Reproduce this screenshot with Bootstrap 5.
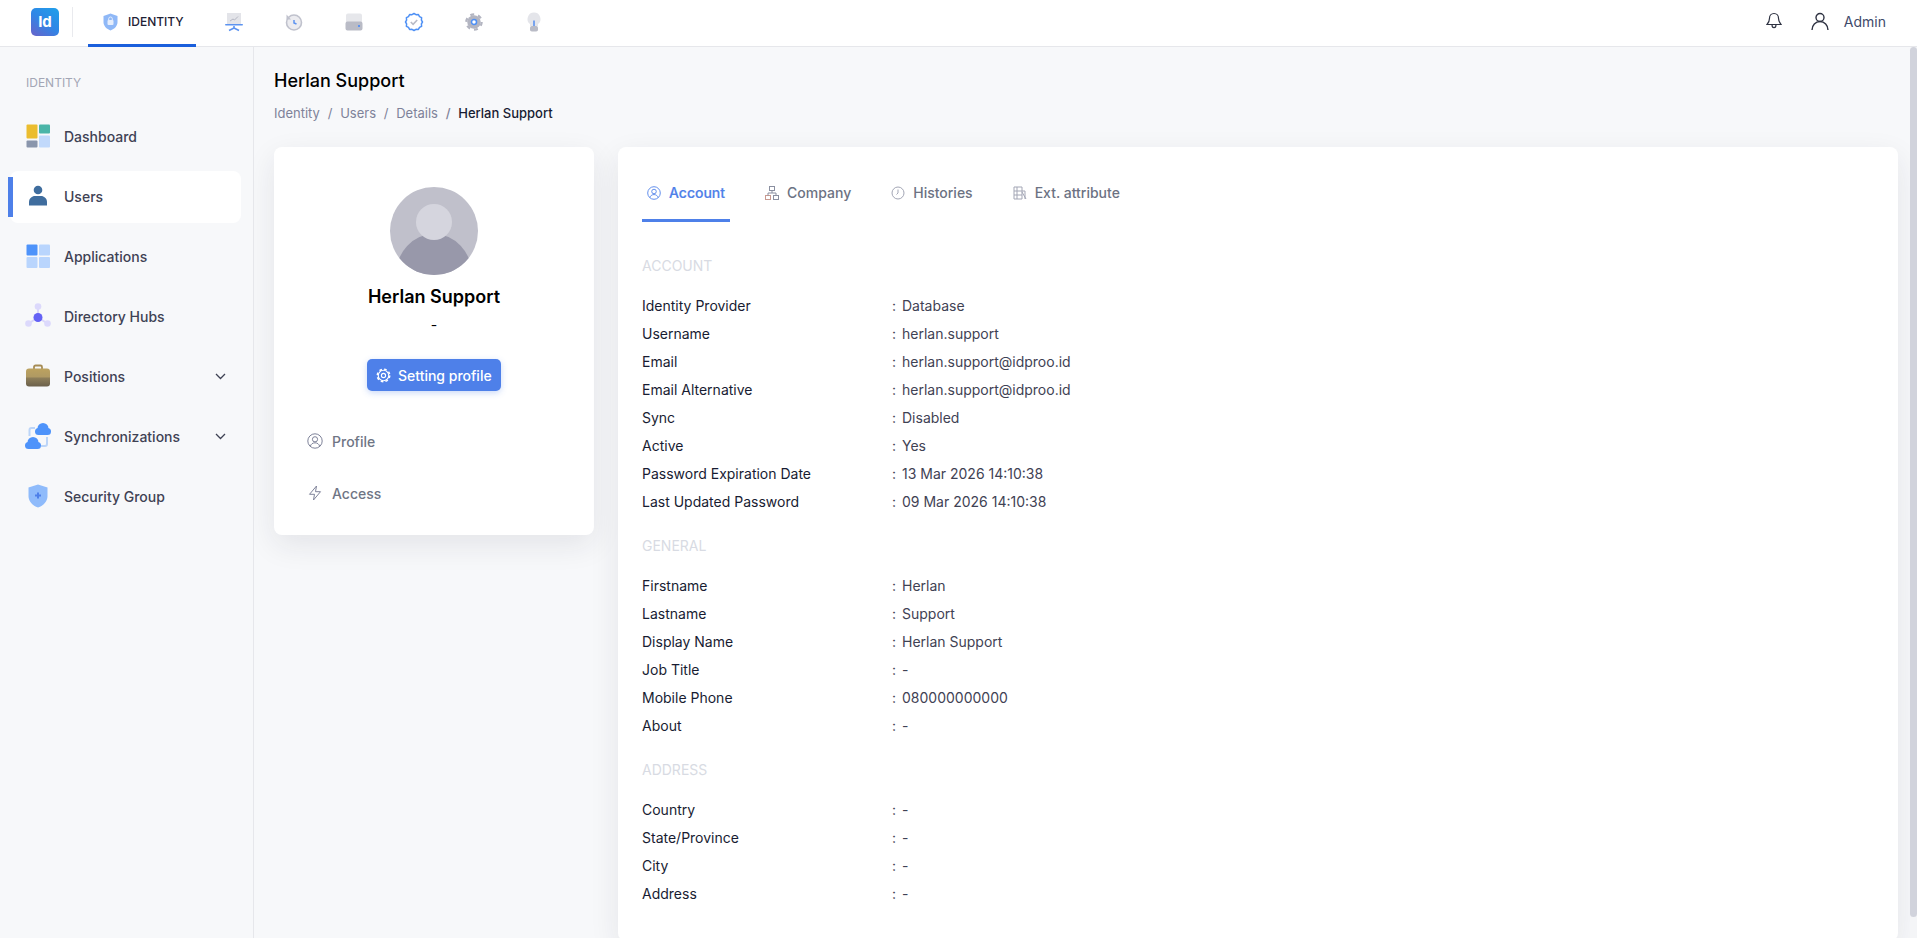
<!DOCTYPE html>
<html lang="en">
  <head>
    <meta charset="UTF-8" />
    <meta name="viewport" content="width=device-width, initial-scale=1.0" />
    <title>Herlan Support - Identity</title>
    <link href="https://cdn.jsdelivr.net/npm/bootstrap@5.3.0/dist/css/bootstrap.min.css" rel="stylesheet" />
    <style>
      html, body { height: 100%; }
      body { font-family: "Inter", "Liberation Sans", sans-serif; font-size: 14px; background: #f7f8fa; color: #181c32; overflow: hidden; }
      .topbar { height: 47px; background: #fff; border-bottom: 1px solid #e6e7eb; padding: 0 31px 0 31px; }
      .logo-box { width: 28px; height: 28px; border-radius: 5px; background: linear-gradient(35deg, #6a62c9 0%, #2f86e6 50%, #20a0ea 100%); color: #fff; font-weight: 700; font-size: 15px; line-height: 28px; text-align: center; margin-bottom: 2px; }
      .logo-sep { width: 1px; height: 30px; background: #e9eaee; margin: 0 15px 2px 13px; }
      .top-tab { height: 47px; display: flex; align-items: center; border-bottom: 3px solid transparent; }
      .top-tab.on { width: 108px; padding-left: 15px; gap: 10px; border-bottom-color: #1a5fdc; font-size: 12px; font-weight: 500; color: #1e2235; margin-right: 8px; }
      .top-tab.ic { width: 60px; justify-content: center; }
      .account-ico { margin-left: 29px; }
      .admin-name { color: #3f4a6b; font-size: 14px; margin-left: 15px; }
      .body-row { height: calc(100vh - 47px); }
      .side { width: 254px; flex: none; border-right: 1px solid #e6e7eb; padding: 26px 12px 0 10px; }
      .side-label { font-size: 12px; line-height: 20px; color: #a3a6b5; margin: 0 0 18px 16px; }
      .side-item { position: relative; height: 52px; margin-bottom: 8px; padding: 0 15px 2px 16px; border-radius: 8px; color: #3f4254; font-weight: 500; text-decoration: none; display: flex; align-items: center; gap: 14px; }
      .side-item svg.ico { width: 24px; height: 24px; flex: none; }
      .side-item svg.ico.wide { width: 26px; height: 26px; margin: 0 -1px; }
      .side-item.on { background: #fff; }
      .side-item.on::before { content: ""; position: absolute; left: -2px; top: 6px; width: 5px; height: 40px; background: #4e80e9; }
      .side-item .chev { margin-left: auto; }
      .main-pane { flex: 1; min-width: 0; overflow: hidden; padding: 22px 12px 20px 20px; }
      .scroll-rail { width: 7px; flex: none; background: #f4f5f7; }
      .scroll-thumb { height: 870px; background: #d1d3dc; border-radius: 4px; }
      .page-title { font-size: 18px; line-height: 24px; font-weight: 500; color: #000; margin: 0 0 10px; }
      .breadcrumb { font-size: 13px; line-height: 20px; margin-bottom: 24px; --bs-breadcrumb-item-padding-x: .485rem; --bs-breadcrumb-divider-color: #7e8299; --bs-breadcrumb-item-active-color: #181c32; }
      .breadcrumb a { color: #7e8299; text-decoration: none; }
      .breadcrumb .active { font-weight: 500; }
      .panel { border: 0; border-radius: 8px; background: #fff; box-shadow: 0 10px 30px rgba(30, 35, 60, .09); }
      .panel-left { width: 320px; flex: none; padding: 40px 24px 24px; height: 388px; }
      .panel-right { flex: 1; min-width: 0; padding: 20px 24px 34px; }
      .avatar-svg { width: 88px; height: 88px; flex: none; display: block; margin: 0 auto; }
      .who { font-size: 18px; line-height: 24px; font-weight: 600; color: #000; margin: 10px 0 6px; text-align: center; }
      .who-sub { line-height: 20px; color: #000; text-align: center; margin-bottom: 24px; }
      .set-btn { display: flex; align-items: center; gap: 7px; width: 134px; height: 32px; flex: none; margin: 0 auto 32px; padding: 0 9px; border: 0; border-radius: 5px; background: #4e80e9; color: #fff; font-size: 14px; font-weight: 500; box-shadow: 0 2px 6px rgba(78, 128, 233, .3); white-space: nowrap; }
      .set-btn svg { flex: none; }
      .side-link { height: 36px; flex: none; padding-left: 9px; margin-bottom: 16px; display: flex; align-items: center; gap: 9px; color: #6f7585; font-weight: 500; text-decoration: none; }
      .side-link:last-child { margin-bottom: 0; }
      .tab-row { gap: 30px; margin-bottom: 34px; }
      .tab-link { display: flex; align-items: center; gap: 8px; padding: 16px 5px; line-height: 20px; color: #6c7283; font-weight: 500; text-decoration: none; border-bottom: 3px solid transparent; }
      .tab-link.on { color: #4e80e9; border-bottom-color: #4e80e9; -webkit-text-stroke: .2px #4e80e9; }
      .sec-label { line-height: 20px; color: #d8dbe3; margin: 21px 0 15px; }
      .sec-label.first { margin-top: 0; }
      .data-row { display: flex; height: 28px; align-items: center; }
      .data-key { width: 250px; flex: none; color: #181c32; }
      .data-colon { width: 10px; flex: none; color: #3f4254; }
      .data-val { color: #3f4254; }
    </style>
  </head>
  <body>
    <header class="topbar d-flex align-items-center">
      <div class="logo-box">Id</div>
      <div class="logo-sep"></div>
      <div class="top-tab on">
        <svg width="15" height="18" viewBox="0 0 15 18"><path d="M7.5 0.5 14.5 3V9c0 4-3 7-7 8.5C3.500 16 .5 13 .5 9V3z" fill="#8fb8f7"/><rect x="4.500" y="7" width="6" height="5" rx="1" fill="#e6eefc"/><path d="M5.700 7V5.800a1.800 1.800 0 0 1 3.600 0V7" fill="none" stroke="#e6eefc" stroke-width="1"/></svg>
        <span>IDENTITY</span>
      </div>
      <div class="top-tab ic">
        <svg width="20" height="20" viewBox="0 0 20 20"><rect x="3" y="1" width="14" height="11" fill="#e3e4e9"/><path d="M6 9l3-2 1.500 1L14 4.500" fill="none" stroke="#b5b7c3" stroke-width="1"/><rect x="1" y="12" width="18" height="1.600" rx=".8" fill="#5c93f0"/><path d="M10 14v2.500M10 16l-5 2.500M10 16l5 2.500" stroke="#5c93f0" stroke-width="1.600" fill="none"/></svg>
      </div>
      <div class="top-tab ic">
        <svg width="20" height="20" viewBox="0 0 20 20"><circle cx="10" cy="10.500" r="7.500" fill="#ececf0" stroke="#c0c2cd" stroke-width="1.600"/><path d="M2.500 2.500v5h4.500z" fill="#c0c2cd"/><path d="M10 8v3l2.500 1" fill="none" stroke="#5c93f0" stroke-width="1.500"/></svg>
      </div>
      <div class="top-tab ic">
        <svg width="20" height="20" viewBox="0 0 20 20"><path d="M4 1.500h12a2 2 0 0 1 2 2V11H2V3.500a2 2 0 0 1 2-2z" fill="#e6e7eb"/><path d="M3.500 9.500h13a2 2 0 0 1 2 2v5a2 2 0 0 1-2 2h-13a2 2 0 0 1-2-2v-5a2 2 0 0 1 2-2z" fill="#b9bbc6"/><rect x="14" y="13" width="2" height="2" fill="#5c93f0"/></svg>
      </div>
      <div class="top-tab ic">
        <svg width="20" height="20" viewBox="0 0 20 20"><path d="M10 1.500l2 1.200 2.400-.2 1.100 2.100 2.100 1.100-.2 2.400 1.100 1.900-1.100 1.900.2 2.400-2.100 1.100-1.100 2.100-2.400-.2-2 1.200-2-1.200-2.400.2-1.100-2.100-2.100-1.100.2-2.400L1.500 10l1.100-1.900-.2-2.400 2.100-1.100 1.100-2.100 2.400.2z" fill="#fff" stroke="#4e90f5" stroke-width="1.500" stroke-linejoin="round"/><path d="M6.800 10l2.300 2.300 4.100-4.300" fill="none" stroke="#b9bbc6" stroke-width="1.600"/></svg>
      </div>
      <div class="top-tab ic">
        <svg width="18" height="18" viewBox="0 0 20 20"><circle cx="10" cy="10" r="7.500" fill="#b3b5c1"/><circle cx="10" cy="10" r="8.500" fill="none" stroke="#b3b5c1" stroke-width="2.500" stroke-dasharray="4.400 4.500"/><circle cx="10" cy="10" r="2.800" fill="#fff" stroke="#4e90f5" stroke-width="1.700"/></svg>
      </div>
      <div class="top-tab ic">
        <svg width="20" height="20" viewBox="0 0 20 20"><path d="M10 .5a6.500 6.500 0 0 1 4 11.600V14H6v-1.900A6.500 6.500 0 0 1 10 .5z" fill="#e4e5ea"/><rect x="6" y="14" width="8" height="5.500" rx="1.800" fill="#b9bbc6"/><rect x="9.200" y="8.500" width="1.600" height="5.500" fill="#5c93f0"/></svg>
      </div>
      <div class="ms-auto d-flex align-items-center mb-1">
        <svg width="16" height="18" viewBox="0 0 16 18"><path d="M8 1.500c-2.800 0-4.500 2-4.500 4.700 0 3-1 4.600-2.500 6.300h14c-1.500-1.700-2.500-3.300-2.500-6.300C12.500 3.500 10.800 1.500 8 1.500zM6 12.700c0 1.800 1 3 2 3s2-1.200 2-3" fill="none" stroke="#2e3242" stroke-width="1.200"/></svg>
        <svg class="account-ico" width="18" height="19" viewBox="0 0 18 19"><circle cx="9" cy="5.500" r="4" fill="none" stroke="#2e3242" stroke-width="1.400"/><path d="M1 18c0-4.500 3.500-8.500 8-8.500s8 4 8 8.500" fill="none" stroke="#2e3242" stroke-width="1.400"/></svg>
        <span class="admin-name">Admin</span>
      </div>
    </header>

    <div class="body-row d-flex">
      <aside class="side">
        <div class="side-label">IDENTITY</div>
        <a class="side-item" href="#">
          <svg class="ico" viewBox="0 0 24 24"><rect x="0.500" y="0.500" width="11" height="14" rx="1" fill="#ebbd2f"/><rect x="13" y="0.500" width="11" height="9" rx="1" fill="#4bb5a8"/><rect x="0.500" y="16.500" width="11" height="7" rx="1" fill="#8a96ac"/><rect x="13" y="11.500" width="11" height="12" rx="1" fill="#c1d9fb"/></svg>
          <span>Dashboard</span>
        </a>
        <a class="side-item on" href="#">
          <svg class="ico" viewBox="0 0 24 24"><circle cx="12" cy="6" r="4.300" fill="#3f6d9e"/><path d="M3 21.500v-3.500c0-3.500 3-6 6-6h6c3 0 6 2.500 6 6v3.500z" fill="#3f6d9e"/></svg>
          <span>Users</span>
        </a>
        <a class="side-item" href="#">
          <svg class="ico" viewBox="0 0 24 24"><rect x="0.500" y="0.500" width="11" height="11" rx="1" fill="#4e93fa"/><rect x="13" y="0.500" width="11" height="11" rx="1" fill="#b9d5fd"/><rect x="0.500" y="13" width="11" height="11" rx="1" fill="#b9d5fd"/><rect x="13" y="13" width="11" height="11" rx="1" fill="#b9d5fd"/></svg>
          <span>Applications</span>
        </a>
        <a class="side-item" href="#">
          <svg class="ico wide" viewBox="0 0 26 26"><path d="M13 5v10M13 14.500l-9.500 6M13 14.500l9.500 6" stroke="#d9d6fb" stroke-width="2"/><circle cx="13" cy="3.500" r="3.300" fill="#dcd9fc"/><circle cx="3.500" cy="20.500" r="3.300" fill="#dcd9fc"/><circle cx="22.500" cy="20.500" r="3.300" fill="#dcd9fc"/><circle cx="13" cy="14.500" r="4.500" fill="#6462f5"/></svg>
          <span>Directory Hubs</span>
        </a>
        <a class="side-item" href="#">
          <svg class="ico" viewBox="0 0 24 24"><defs><linearGradient id="bagFill" x1="0" y1="0" x2="0" y2="1"><stop offset="0" stop-color="#bca25f"/><stop offset=".45" stop-color="#b09a63"/><stop offset=".55" stop-color="#8c7d59"/><stop offset="1" stop-color="#6b604b"/></linearGradient></defs><path d="M8 5V3a1.500 1.500 0 0 1 1.500-1.500h5A1.500 1.500 0 0 1 16 3v2" fill="none" stroke="#a68c55" stroke-width="1.800"/><rect x="0" y="4.500" width="24" height="18" rx="3" fill="url(#bagFill)"/></svg>
          <span>Positions</span>
          <svg class="chev" width="11" height="7" viewBox="0 0 11 7"><path d="M1 1l4.500 4.500L10 1" fill="none" stroke="#3f4254" stroke-width="1.300"/></svg>
        </a>
        <a class="side-item" href="#">
          <svg class="ico wide" viewBox="0 0 26 26"><path d="M4.500 13V7a2 2 0 0 1 2-2H10M22 14v7a2 2 0 0 1-2 2h-4" fill="none" stroke="#bcd5f8" stroke-width="2"/><g fill="#4e93fa"><circle cx="18" cy="5.500" r="5.500"/><circle cx="13.500" cy="8.500" r="3.500"/><circle cx="22.500" cy="8.500" r="3.500"/><rect x="13.500" y="7" width="9" height="5"/><circle cx="8" cy="19.500" r="5.500"/><circle cx="3.500" cy="22.500" r="3.500"/><circle cx="12.500" cy="22.500" r="3.500"/><rect x="3.500" y="21" width="9" height="5"/></g></svg>
          <span>Synchronizations</span>
          <svg class="chev" width="11" height="7" viewBox="0 0 11 7"><path d="M1 1l4.500 4.500L10 1" fill="none" stroke="#3f4254" stroke-width="1.300"/></svg>
        </a>
        <a class="side-item" href="#">
          <svg class="ico" viewBox="0 0 24 24"><path d="M12 0.500 21.500 3.500V12c0 5.500-4 9.500-9.500 11.500C6.500 21.500 2.500 17.500 2.500 12V3.500z" fill="#8fbbfb"/><path d="M12 8.500v6M9 11.500h6" stroke="#4e80e9" stroke-width="2"/></svg>
          <span>Security Group</span>
        </a>
      </aside>

      <main class="main-pane">
        <h1 class="page-title">Herlan Support</h1>
        <nav>
          <ol class="breadcrumb">
            <li class="breadcrumb-item"><a href="#">Identity</a></li>
            <li class="breadcrumb-item"><a href="#">Users</a></li>
            <li class="breadcrumb-item"><a href="#">Details</a></li>
            <li class="breadcrumb-item active">Herlan Support</li>
          </ol>
        </nav>

        <div class="d-flex align-items-start gap-4">
          <div class="card panel panel-left">
            <svg class="avatar-svg" viewBox="0 0 88 88">
              <defs><clipPath id="avClip"><circle cx="44" cy="44" r="44"/></clipPath></defs>
              <circle cx="44" cy="44" r="44" fill="#c0c0cb"/>
              <g clip-path="url(#avClip)">
                <ellipse cx="44" cy="88" rx="38" ry="41" fill="#9898aa"/>
              </g>
              <circle cx="44" cy="35" r="18" fill="#d5d5de"/>
            </svg>
            <div class="who">Herlan Support</div>
            <div class="who-sub">-</div>
            <button class="btn set-btn" type="button">
              <svg width="15" height="15" viewBox="0 0 20 20"><circle cx="10" cy="10" r="7" fill="none" stroke="#fff" stroke-width="1.500"/><circle cx="10" cy="10" r="8.300" fill="none" stroke="#fff" stroke-width="2" stroke-dasharray="3.500 3"/><circle cx="10" cy="10" r="2.800" fill="none" stroke="#fff" stroke-width="1.500"/></svg>
              <span>Setting profile</span>
            </button>
            <a class="side-link" href="#">
              <svg width="16" height="16" viewBox="0 0 16 16"><circle cx="8" cy="8" r="7.200" fill="none" stroke="#7e8299" stroke-width="1"/><circle cx="8" cy="6.300" r="2.600" fill="none" stroke="#7e8299" stroke-width="1"/><path d="M3.300 13.300c.6-2.300 2.500-3.500 4.700-3.500s4.100 1.200 4.700 3.500" fill="none" stroke="#7e8299" stroke-width="1"/></svg>
              <span>Profile</span>
            </a>
            <a class="side-link" href="#">
              <svg width="16" height="16" viewBox="0 0 16 16"><path d="M9.500 1 2.500 9.300h5L6.500 15l7-8.300h-5z" fill="none" stroke="#7e8299" stroke-width="1" stroke-linejoin="round"/></svg>
              <span>Access</span>
            </a>
          </div>

          <div class="card panel panel-right">
            <div class="nav tab-row">
              <a class="tab-link on" href="#">
                <svg width="14" height="14" viewBox="0 0 16 16"><circle cx="8" cy="8" r="7.200" fill="none" stroke="#4e80e9" stroke-width="1"/><circle cx="8" cy="6.300" r="2.600" fill="none" stroke="#4e80e9" stroke-width="1"/><path d="M3.300 13.300c.6-2.300 2.500-3.500 4.700-3.500s4.100 1.200 4.700 3.500" fill="none" stroke="#4e80e9" stroke-width="1"/></svg>
                Account
              </a>
              <a class="tab-link" href="#">
                <svg width="14" height="14" viewBox="0 0 14 14"><rect x="4.500" y="0.500" width="5" height="4" fill="none" stroke="#8a8fa0"/><rect x="0.500" y="9.500" width="5" height="4" fill="none" stroke="#c99a90"/><rect x="8.500" y="9.500" width="5" height="4" fill="none" stroke="#8a8fa0"/><path d="M7 4.500V7M3 9.500V7h8v2.500" fill="none" stroke="#8a8fa0"/></svg>
                Company
              </a>
              <a class="tab-link" href="#">
                <svg width="14" height="14" viewBox="0 0 14 14"><circle cx="7" cy="7" r="6" fill="none" stroke="#a3a6b5"/><path d="M7 3.500V7L5.500 8.500" fill="none" stroke="#a3a6b5"/></svg>
                Histories
              </a>
              <a class="tab-link" href="#">
                <svg width="14" height="14" viewBox="0 0 14 14"><path d="M1 1h8v12H1zM1 5h8M1 9h8M4 1v12M9 5h3v8M9 6l4 7" fill="none" stroke="#a3a6b5"/></svg>
                Ext. attribute
              </a>
            </div>

            <div class="sec-label first">ACCOUNT</div>
            <div class="data-row"><div class="data-key">Identity Provider</div><div class="data-colon">:</div><div class="data-val">Database</div></div>
            <div class="data-row"><div class="data-key">Username</div><div class="data-colon">:</div><div class="data-val">herlan.support</div></div>
            <div class="data-row"><div class="data-key">Email</div><div class="data-colon">:</div><div class="data-val">herlan.support@idproo.id</div></div>
            <div class="data-row"><div class="data-key">Email Alternative</div><div class="data-colon">:</div><div class="data-val">herlan.support@idproo.id</div></div>
            <div class="data-row"><div class="data-key">Sync</div><div class="data-colon">:</div><div class="data-val">Disabled</div></div>
            <div class="data-row"><div class="data-key">Active</div><div class="data-colon">:</div><div class="data-val">Yes</div></div>
            <div class="data-row"><div class="data-key">Password Expiration Date</div><div class="data-colon">:</div><div class="data-val">13 Mar 2026 14:10:38</div></div>
            <div class="data-row"><div class="data-key">Last Updated Password</div><div class="data-colon">:</div><div class="data-val">09 Mar 2026 14:10:38</div></div>

            <div class="sec-label">GENERAL</div>
            <div class="data-row"><div class="data-key">Firstname</div><div class="data-colon">:</div><div class="data-val">Herlan</div></div>
            <div class="data-row"><div class="data-key">Lastname</div><div class="data-colon">:</div><div class="data-val">Support</div></div>
            <div class="data-row"><div class="data-key">Display Name</div><div class="data-colon">:</div><div class="data-val">Herlan Support</div></div>
            <div class="data-row"><div class="data-key">Job Title</div><div class="data-colon">:</div><div class="data-val">-</div></div>
            <div class="data-row"><div class="data-key">Mobile Phone</div><div class="data-colon">:</div><div class="data-val">080000000000</div></div>
            <div class="data-row"><div class="data-key">About</div><div class="data-colon">:</div><div class="data-val">-</div></div>

            <div class="sec-label">ADDRESS</div>
            <div class="data-row"><div class="data-key">Country</div><div class="data-colon">:</div><div class="data-val">-</div></div>
            <div class="data-row"><div class="data-key">State/Province</div><div class="data-colon">:</div><div class="data-val">-</div></div>
            <div class="data-row"><div class="data-key">City</div><div class="data-colon">:</div><div class="data-val">-</div></div>
            <div class="data-row"><div class="data-key">Address</div><div class="data-colon">:</div><div class="data-val">-</div></div>
          </div>
        </div>
      </main>
      <div class="scroll-rail"><div class="scroll-thumb"></div></div>
    </div>

    <script src="https://cdn.jsdelivr.net/npm/bootstrap@5.3.0/dist/js/bootstrap.bundle.min.js"></script>
  </body>
</html>
